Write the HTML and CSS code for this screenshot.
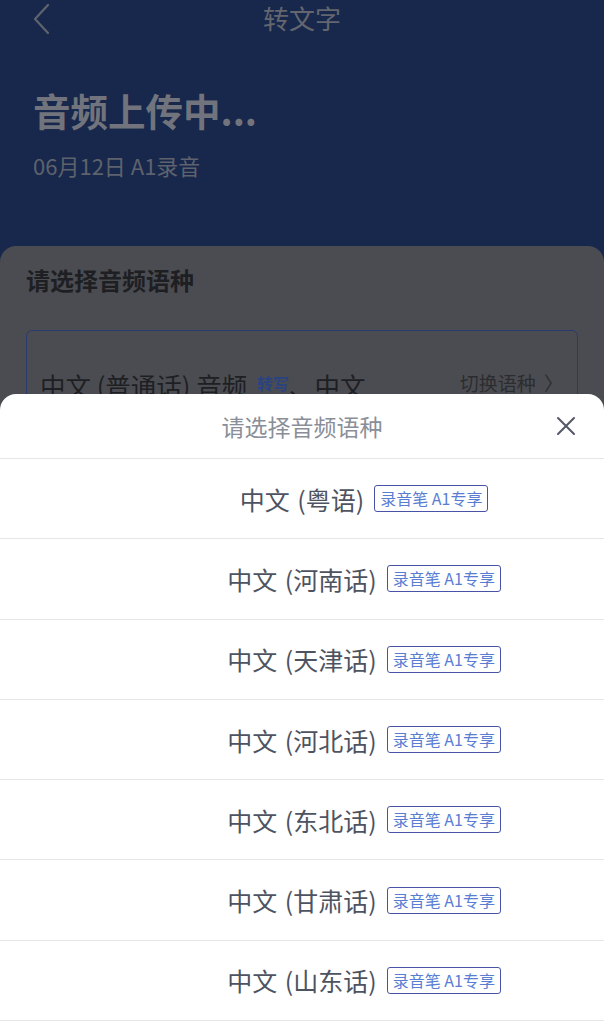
FILE: index.html
```html
<!DOCTYPE html>
<html lang="zh-CN">
<head>
<meta charset="utf-8">
<title>转文字</title>
<link rel="stylesheet" href="styles.css">
</head>
<body>
<div class="page">
  <header class="nav">
    <svg class="back" width="18" height="32" viewBox="0 0 18 32"><path d="M16 2 L3 16 L16 30" fill="none" stroke="#5f636d" stroke-width="2.2" stroke-linecap="round" stroke-linejoin="round"/></svg>
    <div class="nav-title">转文字</div>
  </header>
  <section class="hero">
    <h1 class="hero-title">音频上传中...</h1>
    <div class="hero-sub">06月12日 A1录音</div>
  </section>
  <section class="card">
    <h2 class="card-title">请选择音频语种</h2>
    <div class="lang-box">
      <div class="lang-main">中文 (普通话) 音频 <span class="tag-small">转写</span>、中文</div>
      <div class="lang-switch">切换语种 <span class="chev">〉</span></div>
    </div>
  </section>

  <div class="sheet">
    <div class="sheet-head">
      <div class="sheet-title">请选择音频语种</div>
      <svg class="close" width="20" height="20" viewBox="0 0 20 20"><path d="M2 2 L18 18 M18 2 L2 18" stroke="#535866" stroke-width="2" stroke-linecap="round"/></svg>
    </div>
    <ul class="options">
      <li class="option"><span class="opt-name">中文 (粤语)</span><span class="badge">录音笔 A1专享</span></li>
      <li class="option"><span class="opt-name">中文 (河南话)</span><span class="badge">录音笔 A1专享</span></li>
      <li class="option"><span class="opt-name">中文 (天津话)</span><span class="badge">录音笔 A1专享</span></li>
      <li class="option"><span class="opt-name">中文 (河北话)</span><span class="badge">录音笔 A1专享</span></li>
      <li class="option"><span class="opt-name">中文 (东北话)</span><span class="badge">录音笔 A1专享</span></li>
      <li class="option"><span class="opt-name">中文 (甘肃话)</span><span class="badge">录音笔 A1专享</span></li>
      <li class="option"><span class="opt-name">中文 (山东话)</span><span class="badge">录音笔 A1专享</span></li>
    </ul>
  </div>
</div>
</body>
</html>
```

FILE: styles.css
```css
* { box-sizing: border-box; }
html, body {
  margin: 0;
  padding: 0;
  width: 604px;
  height: 1024px;
  overflow: hidden;
  background: #18284c;
  font-family: "Noto Sans CJK SC", "Noto Sans", sans-serif;
}
.page {
  position: relative;
  width: 604px;
  height: 1024px;
  background: #18284c;
}
.nav {
  height: 38px;
  display: flex;
  align-items: center;
  justify-content: center;
  position: relative;
}
.back {
  position: absolute;
  left: 32px;
  top: 3px;
}
.nav-title {
  font-size: 26px;
  color: #63666f;
  line-height: 38px;
  margin-top: -2px;
}
.hero {
  padding: 48px 33px 0;
  height: 208px;
}
.hero-title {
  margin: 0;
  font-size: 37.5px;
  font-weight: 700;
  color: #71747c;
  line-height: 48px;
}
.hero-sub {
  margin-top: 16px;
  font-size: 22px;
  color: #5e626c;
  line-height: 30px;
}
.card {
  background: #4b4c51;
  border-radius: 16px 16px 0 0;
  padding: 17px 26px 0;
  height: 800px;
}
.card-title {
  margin: 0;
  font-size: 24px;
  font-weight: 700;
  color: #1e1f23;
  line-height: 34px;
}
.lang-box {
  margin-top: 33px;
  border: 1.5px solid #283b6e;
  border-radius: 6px;
  height: 120px;
  padding: 34px 14px 0 13px;
  display: flex;
  align-items: flex-start;
  justify-content: space-between;
}
.lang-main {
  font-size: 25.5px;
  color: #1e1f23;
  line-height: 36px;
}
.tag-small {
  font-size: 16px;
  color: #2a4381;
  font-weight: 700;
  vertical-align: 6px;
  margin: 0 0 0 4px;
}
.lang-switch {
  font-size: 19px;
  color: #2b2c30;
  line-height: 36px;
}
.chev {
  margin-left: 4px;
}
.sheet {
  position: absolute;
  left: 0;
  top: 394px;
  width: 604px;
  height: 640px;
  background: #ffffff;
  border-radius: 16px 16px 0 0;
}
.sheet-head {
  height: 65px;
  display: flex;
  align-items: center;
  justify-content: center;
  position: relative;
  border-bottom: 1px solid #e6e6e8;
}
.sheet-title {
  font-size: 23px;
  color: #8a8e98;
  line-height: 30px;
  margin-top: -1px;
}
.close {
  position: absolute;
  right: 28px;
  top: 22px;
}
.options {
  list-style: none;
  margin: 0;
  padding: 0;
}
.option {
  height: 80.3px;
  border-bottom: 1px solid #e6e6e8;
  display: grid;
  grid-template-columns: 1fr auto 1fr;
  align-items: center;
}
.opt-name {
  grid-column: 2;
  font-size: 25px;
  color: #4d5361;
  line-height: 32px;
  word-spacing: 2px;
}
.badge {
  grid-column: 3;
  justify-self: start;
  margin-left: 10px;
  border: 1px solid #4853a8;
  border-radius: 3px;
  padding: 0 5px;
  font-size: 16px;
  line-height: 25px;
  color: #5a7dd4;
  white-space: nowrap;
}
```
